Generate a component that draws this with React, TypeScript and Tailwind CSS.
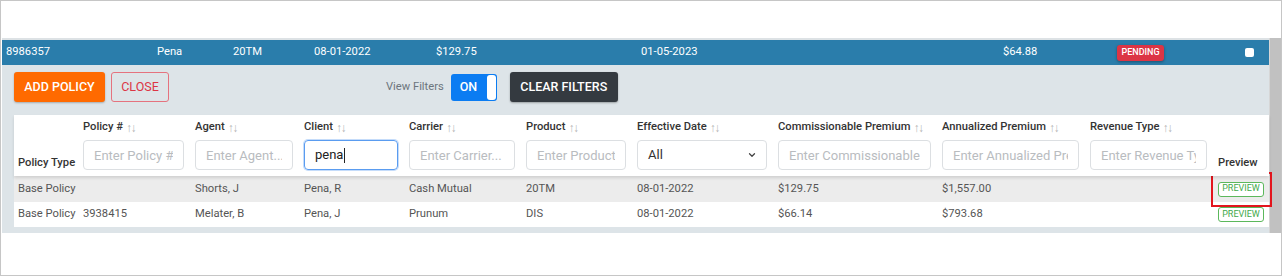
import { ChevronDown } from "lucide-react";

const summary = [
    { text: "8986357", w: "w-[155px] pl-[4px]" },
    { text: "Pena", w: "w-[76px]" },
    { text: "20TM", w: "w-[81px]" },
    { text: "08-01-2022", w: "w-[122px]" },
    { text: "$129.75", w: "w-[205px]" },
    { text: "01-05-2023", w: "w-[362px]" },
    { text: "$64.88", w: "w-[114px]" },
];

const columns = [
    { label: "Policy #", placeholder: "Enter Policy #." },
    { label: "Agent", placeholder: "Enter Agent..." },
    { label: "Client", placeholder: "", value: "pena", focused: true },
    { label: "Carrier", placeholder: "Enter Carrier..." },
    { label: "Product", placeholder: "Enter Product..." },
    { label: "Effective Date", select: true },
    { label: "Commissionable Premium", placeholder: "Enter Commissionable Premium" },
    { label: "Annualized Premium", placeholder: "Enter Annualized Premium" },
    { label: "Revenue Type", placeholder: "Enter Revenue Type" },
];

const rows = [
    ["Base Policy", "", "Shorts, J", "Pena, R", "Cash Mutual", "20TM", "08-01-2022", "$129.75", "$1,557.00", ""],
    ["Base Policy", "3938415", "Melater, B", "Pena, J", "Prunum", "DIS", "08-01-2022", "$66.14", "$793.68", ""],
];

const grid = "grid grid-cols-[64px_112px_109px_105px_117px_111px_141px_164px_148px_128px_1fr]";

function SortArrows() {
    return <span className="ml-[3px] text-[12px] font-normal tracking-[-1.5px] text-[#b5b5b5]">↑↓</span>;
}

function PreviewButton() {
    return (
        <span className="flex h-[15px] w-[46px] items-center justify-center rounded-[3px] border border-[#5cb85c] bg-white text-[9px] text-[#3fa94a]">
            PREVIEW
        </span>
    );
}

export default function App() {
    return (
        <div className="relative h-[276px] w-[1282px] overflow-hidden border border-[#c6c6c6] bg-white font-['Roboto',sans-serif] text-[11.2px]">
            <div className="mt-[37px] flex">
                <div className="ml-[1px] flex-1 border-t-2 border-[#dde2e5]">
                    {/* Summary bar */}
                    <div className="flex h-[25px] items-center bg-[#2a7dab] text-white">
                        {summary.map((s, i) => (
                            <span key={i} className={`${s.w} shrink-0`}>
                                {s.text}
                            </span>
                        ))}
                        <span className="w-[128px] shrink-0">
                            <span className="inline-flex h-[16px] w-[47px] items-center justify-center rounded-[3px] bg-[#dc3545] text-[9px] font-medium shadow-[0_1px_3px_rgba(0,0,0,0.35)]">
                                PENDING
                            </span>
                        </span>
                        <span className="h-[9px] w-[9px] rounded-[2px] bg-white" />
                    </div>

                    {/* Panel */}
                    <div className="bg-[#dde4e8] pb-[6px] pl-[12px] pt-[7px]">
                        <div className="flex h-[30px] items-center">
                            <button className="h-[30px] w-[91px] rounded-[3px] bg-[#ff6a00] text-[12.5px] font-medium text-white shadow-[0_1px_2px_rgba(0,0,0,0.25)]">
                                ADD POLICY
                            </button>
                            <button className="ml-[6px] h-[30px] w-[58px] rounded-[3px] border border-[#e5727e] text-[12.5px] text-[#dc3545]">
                                CLOSE
                            </button>
                            <span className="ml-[217px] text-[#6c757d]">View Filters</span>
                            <span className="ml-[7px] flex h-[27px] w-[46px] items-center rounded-[3px] bg-[#0b7cf2] pl-[9px] pr-[1px]">
                                <span className="flex-1 text-[12.5px] font-medium text-white">ON</span>
                                <span className="h-[25px] w-[9px] rounded-[3px] bg-white" />
                            </span>
                            <button className="ml-[13px] h-[30px] w-[108px] rounded-[3px] bg-[#343a40] text-[12.5px] font-medium text-white shadow-[0_1px_2px_rgba(0,0,0,0.3)]">
                                CLEAR FILTERS
                            </button>
                        </div>

                        {/* Table */}
                        <div className="mt-[13px] bg-white">
                            <div className={`${grid} relative z-10 h-[61px] bg-white shadow-[0_2px_3px_rgba(0,0,0,0.12)]`}>
                                <div className="flex items-end pb-[5px] pl-[4px] font-medium leading-[17px] text-[#333]">
                                    Policy Type
                                </div>
                                {columns.map((c, i) => (
                                    <div key={i} className="pl-[5px] pr-[6px] pt-[4px]">
                                        <div className="flex h-[17px] items-center whitespace-nowrap font-medium text-[#333]">
                                            {c.label}
                                            <SortArrows />
                                        </div>
                                        {c.select ? (
                                            <div className="mt-[4px] flex h-[30px] items-center justify-between rounded-[4px] border border-[#dcdfe2] pl-[10px] pr-[9px] text-[13px] text-[#333]">
                                                All
                                                <ChevronDown size={10} strokeWidth={3} className="text-[#444]" />
                                            </div>
                                        ) : c.focused ? (
                                            <div className="mt-[4px] flex h-[30px] items-center rounded-[4px] border border-[#5a9cf0] px-[10px] text-[13px] text-[#222] shadow-[0_0_0_1px_rgba(90,156,240,0.35)]">
                                                {c.value}
                                                <span className="ml-[1px] h-[15px] w-[1px] bg-[#222]" />
                                            </div>
                                        ) : (
                                            <input
                                                readOnly
                                                placeholder={c.placeholder}
                                                className="mt-[4px] block h-[30px] w-full rounded-[4px] border border-[#dcdfe2] bg-white px-[10px] text-[13px] outline-none placeholder:text-[#b9bcbf]"
                                            />
                                        )}
                                    </div>
                                ))}
                                <div className="flex items-end pb-[5px] pl-[5px] font-medium leading-[17px] text-[#333]">
                                    Preview
                                </div>
                            </div>
                            {rows.map((r, ri) => (
                                <div
                                    key={ri}
                                    className={`${grid} items-center text-[#555] ${ri === 0 ? "h-[26px] bg-[#ececec]" : "h-[25px] bg-white"}`}
                                >
                                    {r.map((cell, ci) => (
                                        <div key={ci} className={`whitespace-nowrap ${ci === 0 ? "pl-[4px]" : "pl-[5px]"}`}>
                                            {cell}
                                        </div>
                                    ))}
                                    <div className="pl-[5px]">
                                        <PreviewButton />
                                    </div>
                                </div>
                            ))}
                        </div>
                    </div>
                </div>
                {/* Scrollbar */}
                <div className="h-[195px] w-[12px] shrink-0 border-l border-[#d6d6d6] bg-[#c1c1c1]" />
            </div>

            {/* Annotation highlight */}
            <div className="absolute left-[1210px] top-[171px] h-[35px] w-[61px] border-2 border-[#e3151d]" />
        </div>
    );
}
